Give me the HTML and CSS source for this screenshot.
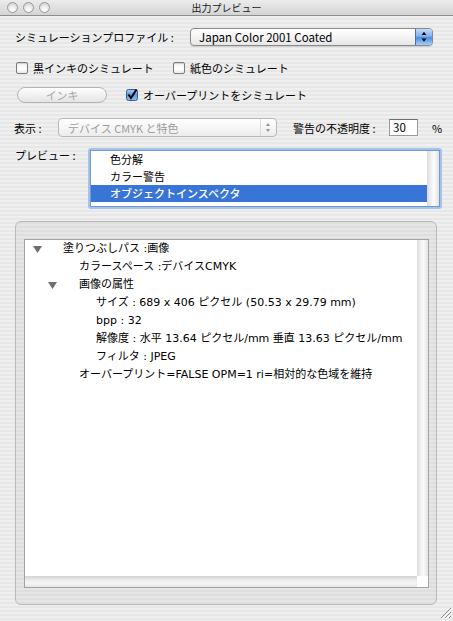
FILE: index.html
```html
<!DOCTYPE html>
<html lang="ja">
<head>
<meta charset="utf-8">
<title>出力プレビュー</title>
<link rel="stylesheet" href="styles.css">
</head>
<body>
<div class="window">
  <div class="titlebar">
    <div class="lights"><span class="light"></span><span class="light"></span><span class="light"></span></div>
    <div class="title">出力プレビュー</div>
    <div></div>
  </div>

  <div class="row r1">
    <span class="label l-profile">シミュレーションプロファイル :</span>
    <div class="popup popup-active">
      <span class="popup-text">Japan Color 2001 Coated</span>
      <span class="popup-btn">
        <svg width="17" height="18" viewBox="0 0 17 18"><polygon points="8.5,3.5 11,7 6,7" fill="#000"/><polygon points="6,10.5 11,10.5 8.5,14" fill="#000"/></svg>
      </span>
    </div>
  </div>

  <div class="row r2">
    <label class="check-item first"><span class="box"></span><span>黒インキのシミュレート</span></label>
    <label class="check-item"><span class="box"></span><span>紙色のシミュレート</span></label>
  </div>

  <div class="row r3">
    <div class="button disabled">インキ</div>
    <label class="check-item over">
      <svg class="box-checked" width="12" height="12" viewBox="0 0 12 12">
        <defs><linearGradient id="cg" x1="0" y1="0" x2="0" y2="1"><stop offset="0" stop-color="#a9cbf3"/><stop offset="0.5" stop-color="#5b9ae6"/><stop offset="1" stop-color="#8fc0f5"/></linearGradient></defs>
        <rect x="0.5" y="0.5" width="11" height="11" rx="2" fill="url(#cg)" stroke="#3a5e90"/>
        <path d="M2.5 5.5 L5 9 L10.5 0.5" stroke="#000" stroke-width="2" fill="none"/>
      </svg>
      <span>オーバープリントをシミュレート</span>
    </label>
  </div>

  <div class="row r4">
    <span class="label l-view">表示 :</span>
    <div class="popup popup-disabled">
      <span class="popup-text">デバイス CMYK と特色</span>
      <span class="popup-sep"></span>
      <svg width="14" height="19" viewBox="0 0 14 19"><polygon points="7,5 9.2,8 4.8,8" fill="#9a9a9a"/><polygon points="4.8,11 9.2,11 7,14" fill="#9a9a9a"/></svg>
    </div>
    <span class="label l-opacity">警告の不透明度 :</span>
    <div class="field">30</div>
    <span class="label l-pct">%</span>
  </div>

  <div class="row r5">
    <span class="label l-preview">プレビュー :</span>
    <div class="listbox">
      <div class="list-inner">
        <div class="list-items">
          <div class="list-item">色分解</div>
          <div class="list-item">カラー警告</div>
          <div class="list-item selected">オブジェクトインスペクタ</div>
        </div>
        <div class="list-scroll"></div>
      </div>
    </div>
  </div>

  <div class="group">
    <div class="scrollview">
      <div class="tree">
        <div class="tree-row lv1">
          <span class="disclosure"><svg width="9" height="7" viewBox="0 0 9 7"><polygon points="0,0 9,0 4.5,7" fill="#6f6f6f"/></svg></span>
          <span>塗りつぶしパス :画像</span>
        </div>
        <div class="tree-row lv2">カラースペース :デバイスCMYK</div>
        <div class="tree-row lv2d">
          <span class="disclosure"><svg width="9" height="7" viewBox="0 0 9 7"><polygon points="0,0 9,0 4.5,7" fill="#6f6f6f"/></svg></span>
          <span>画像の属性</span>
        </div>
        <div class="tree-row lv3">サイズ : 689 x 406 ピクセル (50.53 x 29.79 mm)</div>
        <div class="tree-row lv3">bpp : 32</div>
        <div class="tree-row lv3">解像度 : 水平 13.64 ピクセル/mm 垂直 13.63 ピクセル/mm</div>
        <div class="tree-row lv3">フィルタ : JPEG</div>
        <div class="tree-row lv2">オーバープリント=FALSE OPM=1 ri=相対的な色域を維持</div>
      </div>
      <div class="vscroll"></div>
      <div class="hscroll"></div>
      <div class="corner"></div>
    </div>
  </div>

  <div class="grip-row">
    <svg width="12" height="12" viewBox="0 0 12 12">
      <path d="M11 1 L1 11 M11 5 L5 11 M11 9 L9 11" stroke="#8a8a8a" stroke-width="1"/>
      <path d="M12 2 L2 12 M12 6 L6 12" stroke="#ffffff" stroke-width="1"/>
    </svg>
  </div>
</div>
</body>
</html>
```

FILE: styles.css
```css
* { box-sizing: border-box; margin: 0; padding: 0; }

html, body { width: 453px; height: 621px; overflow: hidden; }

body {
  font-family: "Noto Sans CJK JP", "Noto Sans", sans-serif;
  font-size: 11px;
  line-height: 14px;
  color: #000;
  background: repeating-linear-gradient(to bottom, #efefef 0 2px, #e7e7e7 2px 4px);
}

.window { width: 453px; height: 621px; display: flex; flex-direction: column; }

/* title bar */
.titlebar {
  height: 16px;
  display: grid;
  grid-template-columns: 1fr auto 1fr;
  align-items: center;
  background: linear-gradient(#ececec, #d4d4d4);
  border-bottom: 1px solid #8e8e8e;
}
.lights { display: flex; gap: 5px; padding-left: 7px; }
.light {
  width: 11px; height: 11px; border-radius: 50%;
  border: 1px solid #9a9a9a;
  background: radial-gradient(circle at 50% 75%, #ffffff 0, #ececec 45%, #c4c4c4 100%);
}
.title { font-size: 10px; line-height: 15px; color: #1a1a1a; }

/* rows */
.row { display: flex; align-items: center; }
.r1 { margin-top: 12px; padding-left: 15px; height: 18px; }
.r2 { margin-top: 15px; padding-left: 16px; height: 14px; }
.r3 { margin-top: 12px; padding-left: 17px; height: 16px; }
.r4 { margin-top: 15px; padding-left: 14px; height: 19px; }
.r5 { margin-top: 11px; padding-left: 15px; align-items: flex-start; }

.label { white-space: nowrap; }
.l-profile { width: 175px; }
.l-view { width: 44px; }
.l-opacity { margin-left: 16px; width: 96px; }
.l-pct { margin-left: 14px; }
.l-preview { width: 73px; }

/* popups */
.popup {
  display: flex; align-items: center;
  border-radius: 4px;
  overflow: hidden;
}
.popup-active {
  width: 243px; height: 18px;
  border: 1px solid #8a8a8a;
  background: linear-gradient(#ffffff, #f4f4f4 50%, #e6e6e6);
  box-shadow: 0 1px 1px rgba(0,0,0,0.12);
}
.popup-active .popup-text { flex: 1; padding-left: 8px; font-size: 11.5px; }
.popup-btn {
  width: 17px; height: 16px; display: flex; align-items: center; justify-content: center;
  background: linear-gradient(#c6dcf7, #7fb1ee 45%, #4d8fe3 55%, #a7cdf7);
  border-left: 1px solid #4d6f9f;
}
.popup-btn svg { display: block; }

.popup-disabled {
  width: 219px; height: 19px;
  border: 1px solid #b8b8b8;
  background: linear-gradient(#ffffff, #f6f6f6 50%, #ececec);
  color: #9c9c9c;
}
.popup-disabled .popup-text { flex: 1; padding-left: 9px; }
.popup-sep { width: 1px; height: 17px; background: #dadada; }
.popup-disabled svg { margin-right: 1px; }

/* checkboxes */
.check-item { display: flex; align-items: center; gap: 5px; white-space: nowrap; }
.check-item.first { width: 157px; }
.check-item.over { margin-left: 19px; }
.box {
  width: 12px; height: 12px; border-radius: 2px;
  border: 1px solid #7b7b7b;
  background: linear-gradient(#f2f2f2, #ffffff 60%, #e8e8e8);
  box-shadow: inset 0 1px 1px rgba(0,0,0,0.15);
}
.box-checked { display: block; }

/* button */
.button {
  width: 90px; height: 16px; border-radius: 8px;
  border: 1px solid #b4b4b4;
  background: linear-gradient(#fefefe, #f1f1f1 50%, #e4e4e4);
  display: flex; align-items: center; justify-content: center;
}
.button.disabled { color: #a8a8a8; }

/* text field */
.field {
  width: 29px; height: 17px;
  border: 1px solid #9a9a9a; border-top-color: #6e6e6e;
  background: #fff;
  padding-left: 3px;
  font-size: 11.5px; line-height: 15px;
}

/* list */
.listbox {
  width: 354px; height: 61px;
  border: 2px solid #a5c3e6;
  border-radius: 3px;
  background: #fff;
}
.list-inner {
  height: 100%;
  border: 1px solid #6f9bd0;
  display: grid; grid-template-columns: 1fr 12px;
}
.list-item { height: 17px; line-height: 17px; padding-left: 19px; }
.list-item.selected { background: #3875d7; color: #fff; font-weight: 500; }
.list-scroll { background: linear-gradient(to right, #dcdcdc, #f7f7f7 45%, #fbfbfb 60%, #e1e1e1); }

/* group box */
.group {
  margin-top: 12px; margin-left: 15px;
  width: 422px; height: 384px;
  border: 1px solid #b9b9b9;
  border-radius: 6px;
  background: rgba(0,0,0,0.035);
  padding: 17px 7px 16px 8px;
}
.scrollview {
  height: 100%;
  border: 1px solid #a3a3a3;
  background: #fff;
  display: grid;
  grid-template-columns: 1fr 11px;
  grid-template-rows: 1fr 11px;
}
.tree { grid-column: 1; grid-row: 1; font-family: "DejaVu Sans", "Noto Sans CJK JP", sans-serif; font-size: 11px; }
.vscroll { grid-column: 2; grid-row: 1; background: linear-gradient(to right, #dedede, #f6f6f6 45%, #fafafa 60%, #e2e2e2); }
.hscroll { grid-column: 1; grid-row: 2; background: linear-gradient(#d2d2d2, #eeeeee 40%, #f6f6f6 65%, #e4e4e4); }
.corner { grid-column: 2; grid-row: 2; background: #fff; }

.tree-row { height: 18px; line-height: 18px; display: flex; align-items: center; white-space: nowrap; }
.disclosure { display: flex; align-items: center; }
.lv1 { padding-left: 8px; }
.lv1 .disclosure { width: 30px; }
.lv2 { padding-left: 54px; }
.lv2d { padding-left: 23px; }
.lv2d .disclosure { width: 31px; }
.lv3 { padding-left: 71px; }

/* resize grip */
.grip-row { display: flex; justify-content: flex-end; margin-top: 2px; padding-right: 1px; }
.grip-row svg { display: block; }
```
